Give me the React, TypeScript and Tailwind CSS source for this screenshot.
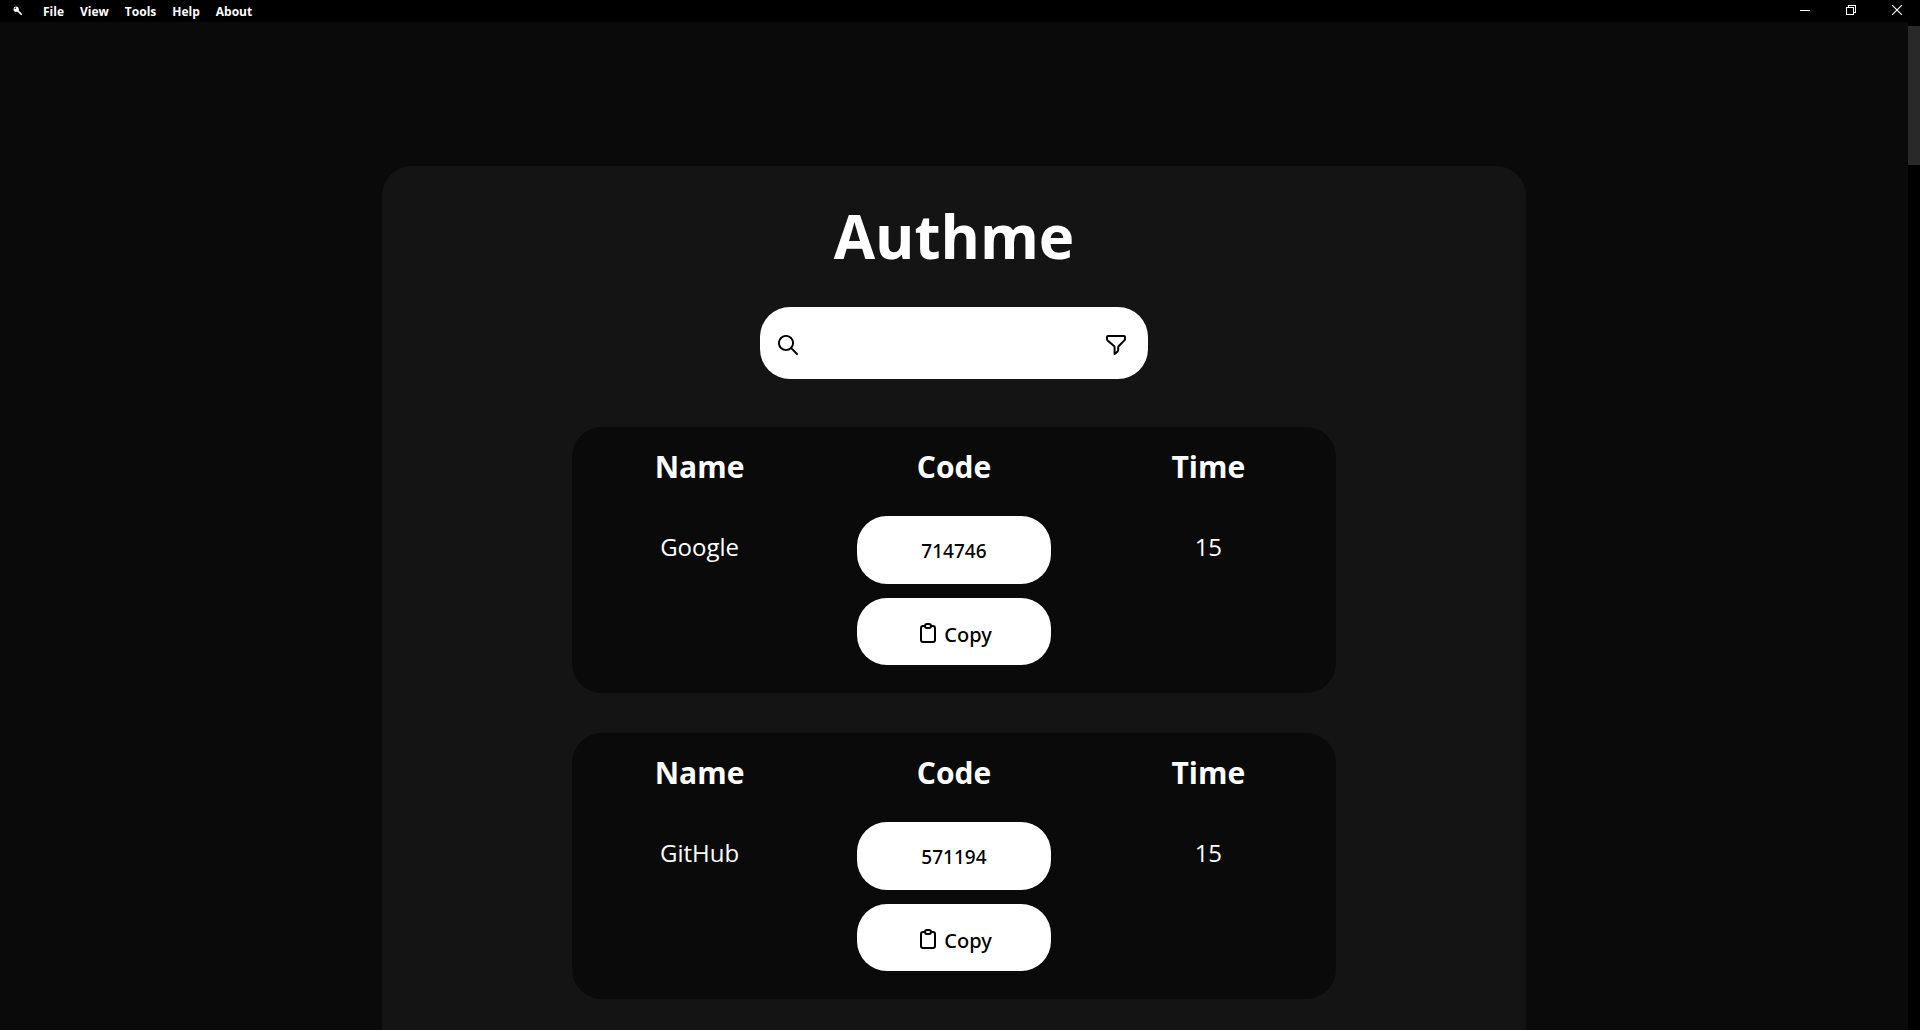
import React from "react";

const menus = ["File", "View", "Tools", "Help", "About"];

const accounts = [
  { name: "Google", code: "714746", time: 15 },
  { name: "GitHub", code: "571194", time: 15 },
];

function KeyIcon() {
  return (
    <svg viewBox="0 0 10 10" className="h-[10px] w-[10px]" aria-hidden="true">
      <path d="M4.6 4.6 L8.8 8.8" stroke="#fff" strokeWidth="1.5" fill="none" />
      <path d="M7 7.6 L7.6 8.4" stroke="#fff" strokeWidth="0.8" fill="none" />
      <circle cx="3.2" cy="3.2" r="2.6" fill="#fff" />
      <circle cx="2.3" cy="2.3" r="0.7" fill="#000" />
    </svg>
  );
}

function SearchIcon() {
  return (
    <svg viewBox="0 0 20 20" className="h-5 w-5" fill="none" stroke="#000" strokeWidth="1.9" strokeLinecap="round" aria-hidden="true">
      <circle cx="8" cy="8" r="7.1" />
      <path d="M13.2 13.2 L19 19" />
    </svg>
  );
}

function FilterIcon() {
  return (
    <svg viewBox="0 0 20 20" className="h-5 w-5" fill="none" stroke="#000" strokeWidth="2" strokeLinejoin="round" aria-hidden="true">
      <path d="M2 1 H18 A1 1 0 0 1 19 2 V4 A2 2 0 0 1 18.4 5.4 L12.8 11 A2 2 0 0 0 12.2 12.4 V15 A2 2 0 0 1 11.6 16.4 L8.6 19 V12.4 A2 2 0 0 0 8 11 L1.6 5.4 A2 2 0 0 1 1 4 V2 A1 1 0 0 1 2 1 Z" />
    </svg>
  );
}

function ClipboardIcon() {
  return (
    <svg viewBox="0 0 16 20" className="h-5 w-4" fill="none" stroke="#000" strokeWidth="2" strokeLinejoin="round" aria-hidden="true">
      <path d="M5 3 H3 A2 2 0 0 0 1 5 V17 A2 2 0 0 0 3 19 H13 A2 2 0 0 0 15 17 V5 A2 2 0 0 0 13 3 H11" />
      <rect x="5" y="1" width="6" height="4" rx="2" />
    </svg>
  );
}

function TitleBar() {
  return (
    <header className="flex h-[22px] shrink-0 items-center justify-between bg-black">
      <nav className="flex items-center pl-[13px] text-[12px] font-bold">
        <KeyIcon />
        <div className="ml-5 flex gap-4 pt-px">
          {menus.map((m) => (
            <button key={m} type="button" className="leading-[22px]">
              {m}
            </button>
          ))}
        </div>
      </nav>
      <div className="flex self-start">
        <button type="button" aria-label="Minimize" className="flex h-5 w-[46px] items-center justify-center">
          <svg viewBox="0 0 10 10" className="h-[10px] w-[10px]" shapeRendering="crispEdges" aria-hidden="true">
            <rect x="0" y="5" width="10" height="1" fill="#fff" />
          </svg>
        </button>
        <button type="button" aria-label="Restore" className="flex h-5 w-[46px] items-center justify-center">
          <svg viewBox="0 0 10 10" className="h-[10px] w-[10px]" fill="none" stroke="#fff" shapeRendering="crispEdges" aria-hidden="true">
            <path d="M0.5 2.5 H7.5 V9.5 H0.5 Z M2.5 2.5 V0.5 H9.5 V7.5 H7.5" />
          </svg>
        </button>
        <button type="button" aria-label="Close" className="flex h-5 w-[46px] items-center justify-center">
          <svg viewBox="0 0 10 10" className="h-[10px] w-[10px]" fill="none" stroke="#fff" strokeWidth="1.1" aria-hidden="true">
            <path d="M0 0 L10 10 M10 0 L0 10" />
          </svg>
        </button>
      </div>
    </header>
  );
}

function AccountCard({ name, code, time }: { name: string; code: string; time: number }) {
  const id = "code-" + name;
  return (
    <section className="grid w-2/3 grid-cols-3 rounded-[30px] bg-[#0a0a0a] pt-[18px] pb-7 text-center">
      <div>
        <h2 className="text-[30px] leading-[44px] font-bold">Name</h2>
        <p className="mt-[42px] text-2xl leading-8">{name}</p>
      </div>
      <div className="flex flex-col items-center">
        <h2 className="text-[30px] leading-[44px] font-bold">
          <label htmlFor={id}>Code</label>
        </h2>
        <input
          id={id}
          readOnly
          defaultValue={code}
          className="mt-[27px] h-[68px] w-[194px] rounded-[30px] bg-white pt-0.5 text-center font-['Noto_Sans',sans-serif] text-[19px] font-medium text-black outline-none"
        />
        <button
          type="button"
          className="mt-[14px] flex h-[67px] w-[194px] items-center justify-center gap-2 rounded-[30px] bg-white pt-0.5 pl-1 font-['Noto_Sans',sans-serif] text-[20px] font-medium text-black"
        >
          <ClipboardIcon />
          <span className="pt-1">Copy</span>
        </button>
      </div>
      <div>
        <h2 className="text-[30px] leading-[44px] font-bold">Time</h2>
        <p className="mt-[42px] text-2xl leading-8">{time}</p>
      </div>
    </section>
  );
}

export default function App() {
  return (
    <div className="flex h-screen flex-col overflow-hidden bg-[#0a0a0a] font-['Open_Sans','Noto_Sans',sans-serif] text-white">
      <TitleBar />
      <div className="flex min-h-0 flex-1">
        <main className="min-w-0 flex-1 overflow-hidden pt-36">
          <div className="mx-auto flex min-h-full w-3/5 flex-col items-center rounded-t-[30px] bg-[#141414] pt-8">
            <h1 className="text-[60px] leading-[77px] font-bold">Authme</h1>
            <div className="mt-8 flex h-[72px] w-[388px] items-center rounded-[30px] bg-white pt-1 pr-[22px] pl-[18px]">
              <SearchIcon />
              <input type="text" aria-label="Search" className="min-w-0 flex-1 px-3 text-lg text-black outline-none" />
              <button type="button" aria-label="Filter">
                <FilterIcon />
              </button>
            </div>
            <div className="mt-12 flex w-full flex-col items-center gap-10">
              {accounts.map((a) => (
                <AccountCard key={a.name} {...a} />
              ))}
            </div>
          </div>
        </main>
        <div className="w-3 shrink-0 bg-black pt-1">
          <div className="h-[139px] bg-[#292929]" />
        </div>
      </div>
    </div>
  );
}
